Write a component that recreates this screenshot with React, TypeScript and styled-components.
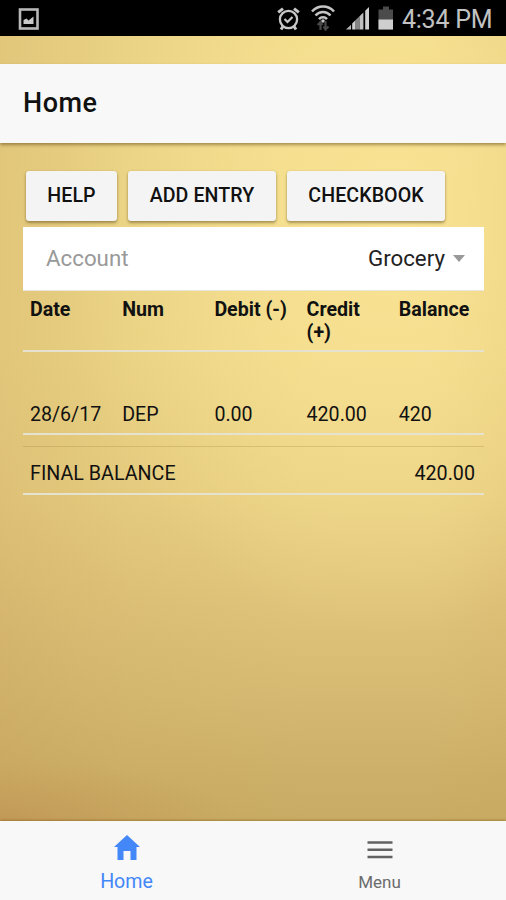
import React from "react";
import styled, { createGlobalStyle } from "styled-components";

const GlobalStyle = createGlobalStyle`
  * { box-sizing: border-box; }
  body { margin: 0; font-family: Roboto, sans-serif; color: #111; }
`;

const Screen = styled.div`
  width: 506px;
  height: 900px;
  display: flex;
  flex-direction: column;
  overflow: hidden;
  background:
    radial-gradient(ellipse 240px 60px at 0% 821px, rgba(190, 138, 78, 0.45), rgba(190, 138, 78, 0) 100%),
    radial-gradient(ellipse 330px 420px at 390px 215px, rgba(255, 232, 152, 0.65), rgba(255, 232, 152, 0) 100%),
    linear-gradient(90deg, rgba(195, 155, 85, 0.3), rgba(200, 165, 90, 0.16) 25%, rgba(220, 180, 100, 0) 60%, rgba(220, 175, 95, 0) 85%, rgba(205, 160, 85, 0.12)),
    linear-gradient(180deg, #efda8b 0, #efd98a 350px, #e9d184 500px, #dfc37a 610px, #d5b972 700px, #cdb069 770px, #c8ab64 821px);
`;

const StatusBar = styled.div`
  height: 36px;
  flex: none;
  display: flex;
  align-items: center;
  background: #000;
  color: #c2c2c2;
  padding: 0 13px 0 18px;
  svg { display: block; flex: none; }
`;

const StatusGroup = styled.div`
  margin-left: auto;
  display: flex;
  align-items: center;
`;

const Clock = styled.span`
  margin-left: 8px;
  padding-top: 4px;
  width: 91px;
  font-size: 25px;
  line-height: 30px;
  letter-spacing: -0.25px;
  white-space: nowrap;
`;

const Header = styled.header`
  margin-top: 28px;
  height: 79px;
  flex: none;
  display: flex;
  align-items: center;
  padding: 0 23px 1px;
  background: #f8f8f8;
  box-shadow: 0 2px 3px rgba(90, 65, 10, 0.5);
`;

const Title = styled.h1`
  margin: 0;
  font-size: 27px;
  line-height: 32px;
  font-weight: 500;
  letter-spacing: 0.5px;
`;

const Content = styled.main`
  flex: 1;
  padding: 28px 22px 0 23px;
`;

const Actions = styled.div`
  display: flex;
  gap: 11px;
  padding-left: 3px;
`;

const ActionButton = styled.button<{ $width: number }>`
  width: ${(p) => p.$width}px;
  height: 50px;
  padding: 0 0 1px;
  border: 0;
  border-radius: 3px;
  background: #f4f4f4;
  box-shadow: 0 2px 3px rgba(80, 60, 10, 0.45), 0 0 2px rgba(80, 60, 10, 0.15);
  font: 500 19.6px/24px Roboto, sans-serif;
  letter-spacing: 0.08px;
  color: #111;
  white-space: nowrap;
`;

const AccountField = styled.div`
  margin-top: 6px;
  height: 64px;
  display: flex;
  align-items: center;
  padding: 0 19px 1px 23px;
  background: #fff;
  border-bottom: 1px solid #e9e6dc;
  font-size: 22.3px;
`;

const Label = styled.span`
  color: #999;
`;

const Value = styled.span`
  margin-left: auto;
  color: #222;
`;

const Caret = styled.span`
  margin-left: 8px;
  border: 6px solid transparent;
  border-top: 7px solid #999;
  border-bottom: 0;
`;

const Row = styled.div<{ $height: number; $pad: number; $bold?: boolean }>`
  height: ${(p) => p.$height}px;
  padding-top: ${(p) => p.$pad}px;
  display: grid;
  grid-template-columns: repeat(5, 1fr);
  border-bottom: 2px solid #e5e2cf;
  font-size: 19.6px;
  line-height: 23px;
  font-weight: ${(p) => (p.$bold ? 700 : 400)};
`;

const Cell = styled.div`
  padding: 0 4px 0 7px;
`;

const Total = styled.div`
  margin-top: 11px;
  height: 49px;
  display: flex;
  justify-content: space-between;
  padding: 15px 9px 0 7px;
  border-top: 1px solid rgba(150, 120, 50, 0.25);
  border-bottom: 2px solid #e5e2cf;
  font-size: 19.7px;
  line-height: 23px;
`;

const TabBar = styled.nav`
  height: 79px;
  flex: none;
  display: grid;
  grid-template-columns: 1fr 1fr;
  background: #f8f8f8;
  box-shadow: 0 -1px 2px rgba(125, 90, 20, 0.5);
`;

const Tab = styled.a<{ $active?: boolean }>`
  display: flex;
  flex-direction: column;
  align-items: center;
  padding-top: 12px;
  color: ${(p) => (p.$active ? "#4387f8" : "#6b6b6b")};
  font-size: ${(p) => (p.$active ? 19.6 : 17)}px;
  line-height: 24px;
  svg { display: block; margin-bottom: 10px; }
`;

const PictureIcon = () => (
  <svg width="22" height="24" viewBox="0 0 22 24">
    <rect x="2" y="3.5" width="17.5" height="19" fill="none" stroke="#b8b8b8" strokeWidth="2.6" />
    <path d="M5.5 18v-4l3-1.5 2 2 5-4V18z" fill="#c8c8c8" />
  </svg>
);

const AlarmIcon = () => (
  <svg width="23" height="25" viewBox="0 0 23 25" fill="none" stroke="#c8c8c8">
    <circle cx="11.5" cy="13.5" r="8.6" strokeWidth="2.3" />
    <path d="M7.5 13l3 3 5-5" strokeWidth="2.2" />
    <path d="M1.2 6.4L6 2.6M21.8 6.4L17 2.6M6 20.5l-2 3M17 20.5l2 3" strokeWidth="3" />
  </svg>
);

const WifiIcon = () => (
  <svg width="24" height="26" viewBox="0 0 24 26" fill="none">
    <path d="M1 6.5C7-.1 17-.1 23 6.5M4.5 10.5c4.2-4.7 10.8-4.7 15 0M8 14.2c2.2-2.5 5.8-2.5 8 0" stroke="#c5c5c5" strokeWidth="2.5" />
    <circle cx="12" cy="16" r="1.8" fill="#c5c5c5" />
    <path d="M9.5 25v-8M6.7 20l2.8-3 2 3M14.5 16v8M12.5 21.5l2 3 3-3" stroke="#484848" strokeWidth="2.2" />
  </svg>
);

const SignalIcon = () => (
  <svg width="24" height="24" viewBox="0 0 24 24">
    <path d="M0 23.5L5 18.7v4.8z" fill="#b5b5b5" />
    <path d="M6.2 17.5l3.4-3.4v9.4H6.2zM19.2 4.8L23 1v22.5h-3.8z" fill="#d0d0d0" />
    <path d="M9.6 14.1l3.9-3.8v13.2H9.6z" fill="#858585" />
    <path d="M13.5 10.3l3.9-3.9v17.1h-3.9z" fill="#c0c0c0" />
  </svg>
);

const BatteryIcon = () => (
  <svg width="16" height="25" viewBox="0 0 16 25">
    <path d="M0.5 3.5H5v-3h6v3h4v20H.5z" fill="#4b4b4b" />
    <path d="M.5 13.5H15v10H.5z" fill="#cecece" />
  </svg>
);

const Gap = styled.span<{ $width: number }>`
  width: ${(p) => p.$width}px;
`;

const HomeIcon = () => (
  <svg width="26" height="27" viewBox="0 0 26 27">
    <path d="M13 2L0 14h3.5v13h6V18h7v9h6V14H26z" fill="#4387f8" />
  </svg>
);

const MenuIcon = () => (
  <svg width="26" height="27" viewBox="0 0 26 27">
    <path d="M.5 9.5h25M.5 16.7h25M.5 24h25" stroke="#626262" strokeWidth="2.5" />
  </svg>
);

const columns = ["Date", "Num", "Debit (-)", "Credit (+)", "Balance"];
const entry = ["28/6/17", "DEP", "0.00", "420.00", "420"];

export default function App() {
  return (
    <>
      <GlobalStyle />
      <Screen>
        <StatusBar>
          <PictureIcon />
          <StatusGroup>
            <AlarmIcon />
            <Gap $width={11} />
            <WifiIcon />
            <Gap $width={11} />
            <SignalIcon />
            <Gap $width={8} />
            <BatteryIcon />
            <Clock>4:34 PM</Clock>
          </StatusGroup>
        </StatusBar>
        <Header><Title>Home</Title></Header>
        <Content>
          <Actions>
            <ActionButton $width={91}>HELP</ActionButton>
            <ActionButton $width={148}>ADD ENTRY</ActionButton>
            <ActionButton $width={158}>CHECKBOOK</ActionButton>
          </Actions>
          <AccountField>
            <Label>Account</Label>
            <Value>Grocery</Value>
            <Caret />
          </AccountField>
          <Row $height={61} $pad={7} $bold>
            {columns.map((c) => <Cell key={c}>{c}</Cell>)}
          </Row>
          <Row $height={83} $pad={51}>
            {entry.map((c) => <Cell key={c}>{c}</Cell>)}
          </Row>
          <Total>
            <span>FINAL BALANCE</span>
            <span>420.00</span>
          </Total>
        </Content>
        <TabBar>
          <Tab $active><HomeIcon />Home</Tab>
          <Tab><MenuIcon />Menu</Tab>
        </TabBar>
      </Screen>
    </>
  );
}
